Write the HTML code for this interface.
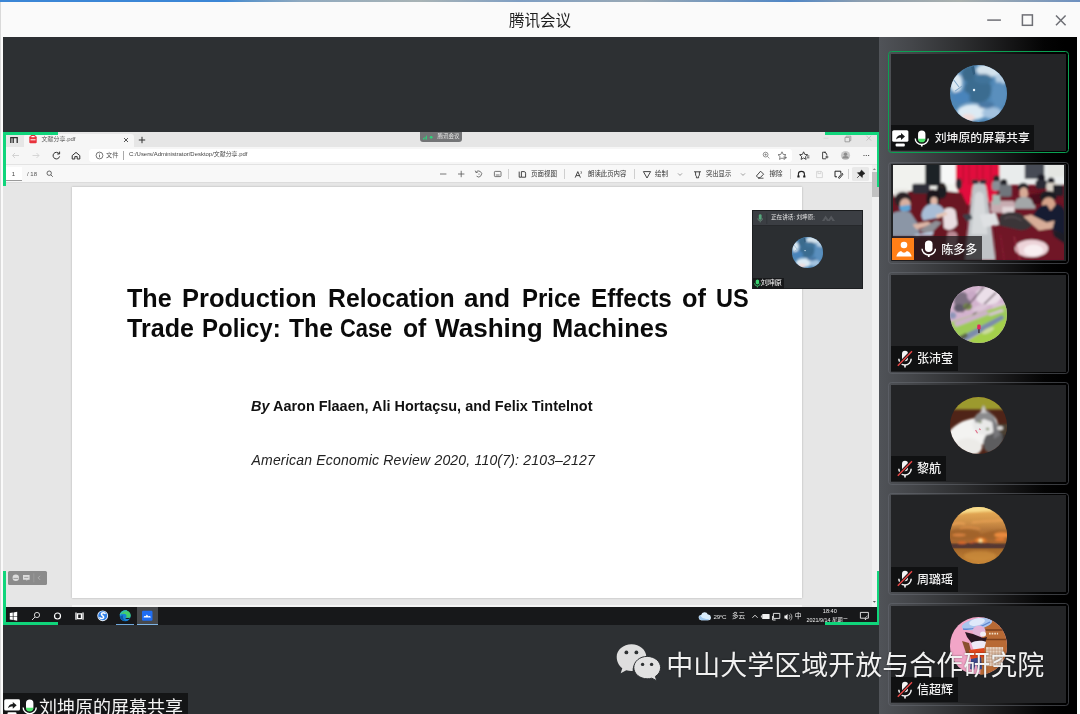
<!DOCTYPE html>
<html lang="zh-CN">
<head>
<meta charset="utf-8">
<title>腾讯会议</title>
<style>
*{box-sizing:border-box;margin:0;padding:0}
html,body{width:1080px;height:714px;overflow:hidden;background:#2d3033}
body{position:relative;font-family:"Liberation Sans","Noto Sans CJK SC",sans-serif;color:#fff}
.abs{position:absolute}
#win{position:absolute;left:0;top:0;width:1080px;height:714px;overflow:hidden;background:#2d3033;will-change:transform;transform:translateZ(0)}
/* title bar */
#topstrip{left:0;top:0;width:1080px;height:3px;background:linear-gradient(90deg,#3b86d6 0,#3b86d6 225px,#5a93c9 245px,#8fa9bf 300px,#a8b3b5 420px,#7f9fc4 520px,#9aa9b4 640px,#4f86c6 790px,#8c9eb0 860px,#a9b0ae 960px,#6d90c0 1080px)}
#titlebar{left:0;top:2px;width:1080px;height:35px;background:#fafafa}
#title{left:0;top:3.400px;width:1080px;height:35px;line-height:35px;text-align:center;color:#1e1e1e;font-size:15.5px}
#lborder{left:0;top:2px;width:3px;height:712px;background:linear-gradient(90deg,#d9d9d9 0,#d9d9d9 .8px,#fafafa 1.200px,#fafafa 3px)}
#rborder{left:1077px;top:37px;width:3px;height:677px;background:#fafafa}
/* side panel */
#side{left:879.400px;top:37px;width:197.600px;height:677px;background:linear-gradient(90deg,#505358 0,#45474b 30px,#2f3032 80px,#161617 130px,#040404 165px,#000 185px)}
.card{position:absolute;left:888px;width:181px;height:102.400px;border:1.500px solid rgba(104,108,114,.55);border-radius:3.500px}
.ci{position:absolute;left:1.500px;top:1.500px;width:175px;height:97.100px;background:#232426;overflow:hidden}
.card.active{border-color:#0ba153}
.avatar{position:absolute;left:59.400px;top:11.800px;width:57.100px;height:57.100px;border-radius:50%;overflow:hidden}
.nm{position:absolute;left:0;bottom:.5px;height:25.300px;background:#101112;font-size:12px;line-height:24px;white-space:nowrap;color:#f2f2f2;font-weight:500}
/* shared screen */
#share{left:0;top:0;width:1080px;height:714px;clip-path:inset(132px 200.600px 89px 3px);background:#e6e6e6;color:#333}
#share div,#share span,#share svg{position:absolute}
.t{white-space:nowrap;line-height:1;color:#444}
.w{font-size:26.5px;font-weight:bold;color:#0a0a0a!important;transform-origin:0 0;display:inline-block}
.g{position:absolute;background:#10d57b}
</style>
</head>
<body>
<div id="win">
<svg width="0" height="0" style="position:absolute"><defs>
<filter id="b1" x="-20%" y="-20%" width="140%" height="140%"><feGaussianBlur stdDeviation="1.6"/></filter>
<filter id="b2" x="-20%" y="-20%" width="140%" height="140%"><feGaussianBlur stdDeviation="0.9"/></filter>
<filter id="b3" x="-20%" y="-20%" width="140%" height="140%"><feGaussianBlur stdDeviation="0.5"/></filter>
<symbol id="av1" viewBox="0 0 57 57"><rect width="57" height="57" fill="#4f87b6"/><g filter="url(#b1)"><ellipse cx="40" cy="5" rx="14" ry="7" fill="#d3e2ec"/><ellipse cx="51" cy="14" rx="6" ry="6" fill="#b5cde2"/><ellipse cx="6" cy="18" rx="6.500" ry="10" fill="#dce8f1"/><ellipse cx="19" cy="9" rx="7" ry="8" fill="#3b6a8c"/><ellipse cx="28" cy="25" rx="13.500" ry="13" fill="#3b6c90"/><ellipse cx="33" cy="14" rx="9" ry="5" fill="#41739a"/><ellipse cx="49" cy="30" rx="8" ry="13" fill="#5a8fbd"/><ellipse cx="11" cy="32" rx="9" ry="6" fill="#4a84bb"/><ellipse cx="22" cy="47" rx="15" ry="8" fill="#dceaf4"/><ellipse cx="18" cy="53" rx="7" ry="4" fill="#f0dcda"/><ellipse cx="42" cy="48" rx="10" ry="6" fill="#a3c2df"/><ellipse cx="36" cy="40" rx="8" ry="3.500" fill="#4878a4"/></g><g filter="url(#b3)"><path d="M21 2l2 8 2-1-1-8z" fill="#335f80"/><path d="M3 14l6 8M5 26l7-5" stroke="#7fa6c8" stroke-width="1" fill="none"/><circle cx="24" cy="25" r="1.200" fill="#eaf6ff"/></g></symbol>
<symbol id="mic" viewBox="0 0 16 18"><rect x="4.100" y=".4" width="7.800" height="12" rx="3.900" fill="#fff"/><path d="M1.100 9a6.900 6.400 0 0 0 13.800 0" fill="none" stroke="#fff" stroke-width="1.500"/><path d="M8 15.200v2.400" stroke="#fff" stroke-width="1.800"/></symbol>
<symbol id="micoff" viewBox="0 0 16 18"><rect x="5" y=".8" width="6" height="10.400" rx="3" fill="#f4f4f4"/><path d="M1.800 8.800a6.200 6.200 0 0 0 12.400 0" fill="none" stroke="#f4f4f4" stroke-width="1.500"/><path d="M8 15v2.600" stroke="#f4f4f4" stroke-width="1.600"/><path d="M1 15.600L14.800 1.400" stroke="#141516" stroke-width="3.200"/><path d="M.8 15.800L15 1.200" stroke="#ef4646" stroke-width="1.300"/></symbol>
</defs></svg>

<div id="topstrip" class="abs"></div>
<div id="titlebar" class="abs"></div>
<div id="title" class="abs">腾讯会议</div>
<svg class="abs" style="left:980px;top:8px" width="96" height="24" viewBox="0 0 96 24"><path d="M7.200 12.100h13.700" stroke="#6e6f75" stroke-width="1.500"/><rect x="42.400" y="6.900" width="10" height="10.400" fill="none" stroke="#6e6f75" stroke-width="1.500"/><path d="M76 7.400l9.600 9.800M85.600 7.400L76 17.200" stroke="#6e6f75" stroke-width="1.500"/></svg>
<div id="lborder" class="abs"></div>
<div id="rborder" class="abs"></div>

<div id="share" class="abs">
<!-- tab row -->
<div style="left:3px;top:132px;width:877px;height:14.500px;background:#e6e6e6"></div>
<div style="left:24px;top:134px;width:110px;height:13px;background:#f6f6f6;border-radius:3px 3px 0 0"></div>
<!-- address row -->
<div style="left:3px;top:146.5px;width:876px;height:18px;background:#f6f6f6"></div>
<div style="left:88.5px;top:148.5px;width:703px;height:13.5px;background:#fff;border-radius:3px"></div>
<!-- pdf toolbar -->
<div style="left:3px;top:164.3px;width:876px;height:19px;background:#f8f8f8;border-top:1px solid #e3e3e3;border-bottom:1px solid #dcdcdc"></div>
<!-- tab row content -->
<svg style="left:9px;top:134.5px" width="10" height="10" viewBox="0 0 10 10"><path d="M1.8 8V2.6h6.4V8M4.2 2.6V8" fill="none" stroke="#2b2b2b" stroke-width="1.3"/></svg>
<svg style="left:28.5px;top:135px" width="8" height="8.5" viewBox="0 0 8 8.5"><rect x=".3" y="1.2" width="7.4" height="7" rx="1" fill="#e8323c"/><rect x="1.6" y="0" width="4.8" height="3.4" rx=".8" fill="#e8323c"/><rect x="2.4" y="1" width="3.2" height="1.2" fill="#fff"/><rect x="1.5" y="4.3" width="5" height="1" fill="#fff"/></svg>
<span class="t" style="left:41.5px;top:136px;font-size:6px;color:#555">文献分享.pdf</span>
<svg style="left:122.5px;top:136.5px" width="6" height="6" viewBox="0 0 6 6"><path d="M1 1l4 4M5 1L1 5" stroke="#444" stroke-width=".9"/></svg>
<svg style="left:137.5px;top:135.5px" width="8" height="8" viewBox="0 0 8 8"><path d="M4 .8v6.4M.8 4h6.4" stroke="#333" stroke-width="1"/></svg>
<div style="left:420px;top:132px;width:41.5px;height:9.5px;background:#737476;border-radius:0 0 3px 3px"></div>
<svg style="left:423px;top:134px" width="12" height="6" viewBox="0 0 12 6"><path d="M.6 5.5v-1.5M2 5.5v-2.6M3.4 5.5v-3.8" stroke="#2fd27a" stroke-width="1"/><circle cx="8.2" cy="3.3" r="1.4" fill="#2fd27a"/></svg>
<span class="t" style="left:437.5px;top:134px;font-size:5.5px;color:#e8e8e8">腾讯会议</span>
<svg style="left:822px;top:134px" width="52" height="10" viewBox="0 0 52 10"><path d="M1.5 4.2h5" stroke="#cfcfcf" stroke-width=".8"/><path d="M23 3.4h4.6v4.4H23zM24.2 3.4V2.2h4.6v4.4h-1.2" fill="none" stroke="#9a9a9a" stroke-width=".9"/><path d="M44.5 1.8l4.6 4.8M49.1 1.8l-4.6 4.8" stroke="#b9b9b9" stroke-width=".8"/></svg>
<!-- address row content -->
<svg style="left:10px;top:150px" width="72" height="11" viewBox="0 0 72 11"><path d="M9 5.5H2.5M5 3L2.5 5.5 5 8" fill="none" stroke="#cfcfcf" stroke-width=".9"/><path d="M22.5 5.5H29M26.5 3L29 5.5 26.5 8" fill="none" stroke="#d2d2d2" stroke-width=".9"/><path d="M49 3.6A3.3 3.3 0 1 0 49.6 6.4" fill="none" stroke="#333" stroke-width="1"/><path d="M49.6 1.6v2.4h-2.4" fill="none" stroke="#333" stroke-width="1"/><path d="M62.2 5.6L66 2.4l3.8 3.2V9h-2.6V6.6h-2.4V9h-2.6z" fill="none" stroke="#333" stroke-width="1"/></svg>
<svg style="left:94.5px;top:151px" width="9" height="9" viewBox="0 0 9 9"><circle cx="4.5" cy="4.5" r="3.4" fill="none" stroke="#555" stroke-width=".8"/><path d="M4.5 4v2.4M4.5 2.6v.8" stroke="#555" stroke-width=".8"/></svg>
<span class="t" style="left:106px;top:151.8px;font-size:6.2px;color:#555">文件</span>
<div style="left:123.2px;top:151px;width:.8px;height:9px;background:#aaa"></div>
<span id="url" class="t" style="left:129px;top:152px;font-size:5.95px;color:#444">C:/Users/Administrator/Desktop/文献分享.pdf</span>
<svg style="left:760px;top:150px" width="118" height="11" viewBox="0 0 118 11"><circle cx="5.6" cy="4.6" r="2.4" fill="none" stroke="#777" stroke-width=".8"/><path d="M7.4 6.4l2 2M4.4 4.6h2.4M5.6 3.4v2.4" stroke="#777" stroke-width=".7"/><path d="M22 1.8l1.2 2.6 2.8.3-2.1 1.9.6 2.8L22 8l-2.5 1.4.6-2.8L18 4.7l2.8-.3z" fill="none" stroke="#666" stroke-width=".8"/><path d="M24.4 7.6h2.4M25.6 6.4v2.4" stroke="#666" stroke-width=".8"/><path d="M43.6 1.8l1.2 2.6 2.8.3-2.1 1.9.6 2.8L43.6 8l-2.5 1.4.6-2.8-2.1-1.9 2.8-.3z" fill="none" stroke="#333" stroke-width=".9"/><path d="M47 6h2.4M47 7.8h2.4" stroke="#333" stroke-width=".8"/><path d="M66 2.2h-3.4v6.6H66M64 2.2a3.3 3.3 0 0 1 3 3" fill="none" stroke="#333" stroke-width=".9"/><path d="M65.4 7h3M66.9 5.5v3" stroke="#333" stroke-width=".9"/><circle cx="85.5" cy="5.5" r="4.6" fill="#c9c9c9"/><circle cx="85.5" cy="4.2" r="1.7" fill="#8c8c8c"/><path d="M82.3 8.4a3.2 2.4 0 0 1 6.4 0z" fill="#8c8c8c"/><circle cx="104" cy="5.5" r=".6" fill="#333"/><circle cx="106.3" cy="5.5" r=".6" fill="#333"/><circle cx="108.6" cy="5.5" r=".6" fill="#333"/></svg>
<!-- pdf toolbar content -->
<div style="left:5.5px;top:166.5px;width:16.5px;height:14px;background:#fff;border-bottom:1px solid #9a9a9a"></div>
<span class="t" style="left:11.8px;top:170.5px;font-size:6px;color:#444">1</span>
<span class="t" style="left:27px;top:170.5px;font-size:6px;color:#555">/ 18</span>
<svg style="left:46px;top:170px" width="8" height="8" viewBox="0 0 8 8"><circle cx="3.2" cy="3.2" r="2.2" fill="none" stroke="#444" stroke-width=".8"/><path d="M4.8 4.8l2 2" stroke="#444" stroke-width=".8"/></svg>
<svg style="left:436px;top:168px" width="72" height="12" viewBox="0 0 72 12"><path d="M4 6h6.4" stroke="#555" stroke-width=".8"/><path d="M22 6h6.4M25.2 2.8v6.4" stroke="#555" stroke-width=".8"/><path d="M40 4.4A3 3 0 1 1 40.6 8.2" fill="none" stroke="#555" stroke-width=".8"/><path d="M39.2 2.6l.7 2 2-.4" fill="none" stroke="#555" stroke-width=".7"/><circle cx="43" cy="6" r=".6" fill="#555"/><rect x="58.4" y="3.4" width="6.6" height="5.2" rx=".8" fill="none" stroke="#555" stroke-width=".8"/><path d="M59.8 7h3.8" stroke="#555" stroke-width=".8"/></svg>
<div style="left:508px;top:169px;width:.8px;height:9.5px;background:#cfcfcf"></div>
<svg style="left:517px;top:169.5px" width="10" height="9" viewBox="0 0 10 9"><path d="M2.2 1.6v5.6h2M4.4 1.6h2.8a1.6 1.6 0 0 1 1.4 1.6v4h-4.2z" fill="none" stroke="#333" stroke-width=".9"/></svg>
<span class="t" style="left:531px;top:171px;font-size:6.5px;color:#333">页面视图</span>
<div style="left:564px;top:169px;width:.8px;height:9.5px;background:#cfcfcf"></div>
<svg style="left:573.5px;top:169.5px" width="10" height="9" viewBox="0 0 10 9"><path d="M1.2 7.6L3.8 1.6 6.4 7.6M2.2 5.6h3.2" fill="none" stroke="#333" stroke-width=".9"/><path d="M7 1.2a2.4 2.4 0 0 1 0 2.6" fill="none" stroke="#333" stroke-width=".7"/></svg>
<span class="t" style="left:588px;top:171px;font-size:6.4px;color:#333">朗读此页内容</span>
<div style="left:634px;top:169px;width:.8px;height:9.5px;background:#cfcfcf"></div>
<svg style="left:642px;top:169.5px" width="10" height="9" viewBox="0 0 10 9"><path d="M1.4 1.6h7.2L5 8z" fill="none" stroke="#333" stroke-width=".9"/></svg>
<span class="t" style="left:655px;top:171px;font-size:6.5px;color:#333">绘制</span>
<svg style="left:676.5px;top:172px" width="6" height="5" viewBox="0 0 6 5"><path d="M1 1.4l2 2 2-2" fill="none" stroke="#777" stroke-width=".7"/></svg>
<svg style="left:692.5px;top:169.5px" width="9" height="9" viewBox="0 0 9 9"><path d="M1 1.8h7M2.6 1.8v3.4l.8 1v1.6h2.2V6.200l.8-1V1.8" fill="none" stroke="#333" stroke-width=".9"/></svg>
<span class="t" style="left:706px;top:171px;font-size:6.3px;color:#333">突出显示</span>
<svg style="left:739.5px;top:172px" width="6" height="5" viewBox="0 0 6 5"><path d="M1 1.4l2 2 2-2" fill="none" stroke="#777" stroke-width=".7"/></svg>
<svg style="left:755px;top:169.5px" width="10" height="9" viewBox="0 0 10 9"><path d="M5.6 1.2l3 3-3.600 3.600H3.200L1.400 6z" fill="none" stroke="#333" stroke-width=".9"/><path d="M3 8.200h5.500" stroke="#333" stroke-width=".8"/></svg>
<span class="t" style="left:769.5px;top:171px;font-size:6.5px;color:#333">擦除</span>
<div style="left:790px;top:169px;width:.8px;height:9.5px;background:#cfcfcf"></div>
<svg style="left:796px;top:168.5px" width="52" height="11" viewBox="0 0 52 11"><path d="M2.400 7.800V5a3 2.600 0 0 1 6 0v2.800" fill="none" stroke="#222" stroke-width="1.100"/><path d="M1.400 6.600h2.200v2h-2.200zM7.200 6.600h2.200v2h-2.200z" fill="#222"/><path d="M20.600 2.400h4.800l1 1v5.200h-5.800zM22 2.400v2.200h2.800V2.400" fill="none" stroke="#cfcfcf" stroke-width=".8"/><path d="M39 2.200h5.800v2.400M39 2.200v5.600h2M42.400 8.600l3.600-4.200 1 .9-3.600 4.100z" fill="none" stroke="#222" stroke-width="1"/></svg>
<div style="left:848px;top:169px;width:.8px;height:9.5px;background:#cfcfcf"></div>
<div style="left:851.5px;top:166.6px;width:17.700px;height:14px;background:#e9e9e9;border-radius:1.5px"></div>
<svg style="left:855.5px;top:168.5px" width="10" height="10" viewBox="0 0 10 10"><path d="M5.400 1l3.600 3.600-1 .3-1.500 1.500-.2 2.200L3.800 6.200 1.200 8.800l2.600-2.600L1.400 3.700l2.200-.2L5.100 2z" fill="#222" stroke="#222" stroke-width=".5" stroke-linejoin="round"/></svg>
<!-- scrollbar -->
<div style="left:872px;top:165.300px;width:7.300px;height:441.700px;background:#f0f0f0"></div>
<div style="left:872px;top:172.300px;width:7.300px;height:24.600px;background:#c1c1c1"></div>
<svg style="left:872px;top:167px" width="5" height="4" viewBox="0 0 5 4"><path d="M.8 3l1.600-1.800L4 3z" fill="#8a8a8a"/></svg>
<svg style="left:872px;top:600px" width="5" height="4" viewBox="0 0 5 4"><path d="M.8 1l1.600 1.800L4 1z" fill="#555"/></svg>
<!-- page -->
<div id="page" style="left:72px;top:186.5px;width:730px;height:411.5px;background:#fff;box-shadow:0 0 2px rgba(0,0,0,.25)"></div>
<div style="left:72px;top:605px;width:730px;height:3px;background:#f4f4f4"></div>
<div id="ttl" style="left:0;top:0">
<span class="t w" style="left:126.6px;top:285.4px;transform:scaleX(0.949)">The</span>
<span class="t w" style="left:182.0px;top:285.4px;transform:scaleX(0.962)">Production</span>
<span class="t w" style="left:327.5px;top:285.4px;transform:scaleX(0.935)">Relocation</span>
<span class="t w" style="left:464.4px;top:285.4px;transform:scaleX(0.978)">and</span>
<span class="t w" style="left:521.6px;top:285.4px;transform:scaleX(0.904)">Price</span>
<span class="t w" style="left:591.2px;top:285.4px;transform:scaleX(0.913)">Effects</span>
<span class="t w" style="left:682.2px;top:285.4px;transform:scaleX(0.955)">of</span>
<span class="t w" style="left:716.2px;top:285.4px;transform:scaleX(0.888)">US</span>
<span class="t w" style="left:126.6px;top:314.6px;transform:scaleX(0.946)">Trade</span>
<span class="t w" style="left:202.2px;top:314.6px;transform:scaleX(0.906)">Policy:</span>
<span class="t w" style="left:288.5px;top:314.6px;transform:scaleX(0.934)">The</span>
<span class="t w" style="left:340.3px;top:314.6px;transform:scaleX(0.824)">Case</span>
<span class="t w" style="left:403.2px;top:314.6px;transform:scaleX(0.931)">of</span>
<span class="t w" style="left:435.2px;top:314.6px;transform:scaleX(0.984)">Washing</span>
<span class="t w" style="left:551.6px;top:314.6px;transform:scaleX(0.961)">Machines</span>
</div>
<span id="t3" class="t" style="left:251px;top:397.8px;font-size:15px;font-weight:bold;color:#111;transform-origin:0 0;transform:scaleX(0.9633)"><i>By</i> Aaron Flaaen, Ali Hortaçsu, and Felix Tintelnot</span>
<span id="t4" class="t" style="left:251.5px;top:452.8px;font-size:14px;font-style:italic;color:#222;letter-spacing:.19px">American Economic Review 2020, 110(7): 2103–2127</span>
<!-- taskbar -->
<div id="taskbar" style="left:3px;top:607px;width:877px;height:18px;background:#17181a"></div>
<div style="left:136.7px;top:607px;width:21.3px;height:18px;background:#47494c"></div>
<div style="left:116px;top:623.6px;width:18px;height:1.2px;background:#6fa8dc"></div>
<div style="left:136.7px;top:623.6px;width:21.3px;height:1.2px;background:#7fb6e8"></div>
<svg style="left:9px;top:610px" width="150" height="13" viewBox="0 0 150 13"><path d="M.8 3l3-.5v3.400H.8zM4.500 2.400l3.700-.6v4.100H4.500zM.8 6.600h3v3.400l-3-.5zM4.500 6.600h3.700v4.100l-3.700-.6z" fill="#fff"/><circle cx="28" cy="5" r="2.600" fill="none" stroke="#e8e8e8" stroke-width=".9"/><path d="M26 7l-3 3" stroke="#e8e8e8" stroke-width=".9"/><circle cx="48.500" cy="6" r="3" fill="none" stroke="#fff" stroke-width="1.200"/><path d="M67 2.600v7.200M74 2.600v7.200" stroke="#fff" stroke-width="1.300"/><path d="M68.600 3.800h3.800v4.800h-3.800z" fill="none" stroke="#fff" stroke-width="1.200"/><circle cx="93.700" cy="5.800" r="5.400" fill="#f2f6fb"/><circle cx="93.700" cy="5.800" r="4.500" fill="#2f7fe6"/><path d="M96 3.400c-2.200-1.600-5 .4-2.600 2.200 2.800 1.600.4 4-2.400 2.200" fill="none" stroke="#fff" stroke-width="1.600" stroke-linecap="round"/><circle cx="116.200" cy="5.800" r="5.500" fill="#1783d6"/><path d="M110.900 4.600a5.500 5.500 0 0 1 10.800.9c0 1.500-1 2.300-2.600 2.300h-2.500c1.200-1 1.300-2.400.3-3.300-1.500-1.200-4-.5-6 .1z" fill="#43cf6c"/><path d="M111 4.800c1.500-2.800 4-4.300 7-4" fill="none" stroke="#2bb7c4" stroke-width="1.200"/><path d="M116.300 7.900h4.800c-.7.900-1.900 1.300-3.200 1.100-.8-.1-1.300-.5-1.600-1.100z" fill="#17181a"/><path d="M114.200 5.200c-.8 1.800-.2 4.400 2.400 5.600-2.600.4-5.200-1.400-5.700-4 1-.9 2.200-1.500 3.300-1.600z" fill="#0c5aa8"/><rect x="133" y=".8" width="10.500" height="10" rx="1.200" fill="#1f6df2"/><path d="M134.600 7.600c0-1.400 1.200-2 2-1.400l1.300-1.600 1.500 1.800c1-.8 2.400-.2 2.400 1.200z" fill="#fff"/></svg>
<svg style="left:698px;top:610.500px" width="14" height="11" viewBox="0 0 14 11"><path d="M3.400 9.200a2.600 2.600 0 0 1-.3-5.200 3.600 3.600 0 0 1 6.800-.4 2.800 2.800 0 0 1 .5 5.600z" fill="#d9ecfb"/><path d="M3.400 9.200a2.600 2.600 0 0 1-.9-4.900c.6 2.600 4.400 3.900 8.600 3.900a2.800 2.800 0 0 1-1 1z" fill="#9fc8ee"/></svg>
<span class="t" style="left:713.500px;top:613.500px;font-size:6.200px;color:#e6e6e6;letter-spacing:-.3px">29°C</span>
<span class="t" style="left:732px;top:613.300px;font-size:6.600px;color:#e6e6e6">多云</span>
<svg style="left:750px;top:610.500px" width="54" height="11" viewBox="0 0 54 11"><path d="M2.400 6.800l2.600-2.600 2.600 2.600" fill="none" stroke="#eee" stroke-width=".9"/><rect x="12.200" y="3" width="7.400" height="5" rx=".6" fill="#f0f0f0"/><path d="M11.400 4.500v2" stroke="#f0f0f0" stroke-width=".9"/><path d="M23.400 2.400h6.400v5h-6.400zM22.600 5v4h3" fill="none" stroke="#f0f0f0" stroke-width=".9"/><path d="M34.400 4.600h1.400l1.800-1.600v6l-1.800-1.600h-1.400z" fill="#f0f0f0"/><path d="M39 3.800a3 3 0 0 1 0 4.400M40.400 2.600a4.600 4.600 0 0 1 0 6.800" fill="none" stroke="#e0e0e0" stroke-width=".7"/></svg>
<span class="t" style="left:794.800px;top:612.800px;font-size:6.800px;color:#f2f2f2">中</span>
<span class="t" style="left:822.800px;top:609.300px;font-size:5.600px;color:#f0f0f0">18:40</span>
<span id="date" class="t" style="left:806.500px;top:618px;font-size:5.400px;color:#f0f0f0">2021/9/14 星期二</span>
<svg style="left:859px;top:611px" width="11" height="10" viewBox="0 0 11 10"><path d="M1.400 1.400h8v5.800H7.600L6.400 8.800V7.200H1.400z" fill="none" stroke="#eee" stroke-width=".9"/><path d="M6 7.200l2.600-2.600" stroke="#eee" stroke-width=".7"/></svg>
<!-- floating pill -->
<div style="left:8px;top:571px;width:38.700px;height:13.600px;background:#8b8b8b;border-radius:1.500px"></div>
<svg style="left:8px;top:571px" width="39" height="14" viewBox="0 0 39 14"><circle cx="7.800" cy="6.800" r="3.200" fill="#dcdcdc"/><path d="M5.400 7.400h4.800" stroke="#8b8b8b" stroke-width=".8"/><path d="M15 4h6.600v4.800h-2l-1 1.200v-1.200H15z" fill="#dcdcdc"/><path d="M16.200 6.400h4.200" stroke="#8b8b8b" stroke-width=".7"/><path d="M25.800 2.400v9" stroke="#a4a4a4" stroke-width=".6"/><path d="M32 4.800l-1.800 2 1.800 2" fill="none" stroke="#bdbdbd" stroke-width=".7"/></svg>
<!-- mini window -->
<div style="left:751.500px;top:209.800px;width:111.700px;height:79.400px;background:#2b2e31;border:1px solid #1d1f21"></div>
<div style="left:752.500px;top:210.800px;width:109.700px;height:15.400px;background:#3b3e43;border-bottom:1px solid #26282b"></div>
<svg style="left:755px;top:212px" width="90" height="13" viewBox="0 0 90 13"><rect x="3.800" y="2.200" width="2.800" height="5.600" rx="1.400" fill="#56a77c"/><path d="M2.800 6.400a2.400 2.400 0 0 0 4.800 0M5.200 8.800v1.600" fill="none" stroke="#6f8f80" stroke-width=".7"/><path d="M11.800 1v11" stroke="#2d3034" stroke-width=".7"/><path d="M67 9l3.600-5.400 2.800 4 2.800-4L80 9h-2.600l-1.200-2-1.400 2h-2.800l-1.400-2-1.200 2z" fill="#55585d"/></svg>
<span class="t" style="left:771px;top:214.800px;font-size:5.600px;color:#e4e4e4">正在讲话: 刘坤原;</span>
<svg id="miniav" style="left:791.800px;top:236.700px;border-radius:50%;overflow:hidden" width="31" height="31" viewBox="0 0 57 57"><use href="#av1"/></svg>
<div style="left:752.500px;top:277.500px;width:31.500px;height:11.200px;background:#17181a"></div>
<svg style="left:753.500px;top:278.500px" width="7" height="9" viewBox="0 0 7 9"><rect x="1.700" y=".4" width="3.400" height="5" rx="1.700" fill="#39d36f"/><path d="M.6 4.200a2.800 2.800 0 0 0 5.600 0M3.400 7v1.400" fill="none" stroke="#39d36f" stroke-width=".8"/></svg>
<span class="t" style="left:760.500px;top:279.300px;font-size:7.400px;color:#f4f4f4;letter-spacing:-.4px">刘坤原</span>
<!-- green corners -->
<div class="g" style="left:3px;top:132px;width:54.800px;height:2.700px"></div>
<div class="g" style="left:3px;top:132px;width:2.600px;height:54px"></div>
<div class="g" style="left:824.500px;top:132px;width:55px;height:2.700px"></div>
<div class="g" style="left:876.500px;top:132px;width:3px;height:54.500px"></div>
<div class="g" style="left:3px;top:622.300px;width:54.800px;height:2.700px"></div>
<div class="g" style="left:3px;top:570.500px;width:2.600px;height:54.500px"></div>
<div class="g" style="left:824.500px;top:622.300px;width:55px;height:2.700px"></div>
<div class="g" style="left:876.500px;top:570.500px;width:3px;height:54.500px"></div>
</div>

<div id="side" class="abs"></div>
<div class="card active" style="top:51px">
<div class="ci"><svg class="avatar" viewBox="0 0 57 57"><use href="#av1"/></svg>
<div class="nm" style="width:143.200px"><svg style="position:absolute;left:1px;top:4.800px" width="17" height="17" viewBox="0 0 17 17"><rect x=".2" y=".2" width="16.200" height="11.600" rx="1.600" fill="#fff"/><rect x="3.600" y="13.600" width="9.200" height="2.800" rx="1" fill="#fff"/><path d="M4 9.400c.6-2.800 2.400-4.200 5-4.300V3l4 3.500-4 3.500V7.800C7 7.700 5.400 8.200 4 9.400z" fill="#1a1b1c"/></svg><svg style="position:absolute;left:23.700px;top:4.800px" width="15.500" height="17" viewBox="0 0 16 18"><use href="#mic"/><path d="M4.100 9.200h7.800a3.900 3.900 0 0 1-7.800 0z" fill="#4be36a"/></svg><span style="position:absolute;left:44.200px;top:.9px;font-size:11.900px">刘坤原的屏幕共享</span></div></div>
</div>
<div class="card" style="top:161.800px">
<div class="ci"><svg id="photo" style="position:absolute;left:2.600px;top:.6px" width="170.800" height="95.300" preserveAspectRatio="none" viewBox="0 0 175 96"><rect width="175" height="96" fill="#6d1424"/><g filter="url(#b2)">
<rect x="-2" y="-2" width="70" height="34" fill="#f1f2ee"/>
<rect x="108" y="-2" width="70" height="22" fill="#e9ecec"/>
<rect x="33" y="-2" width="16" height="23" fill="#1d2027"/>
<rect x="49" y="-2" width="16" height="21" fill="#f6f7f7"/>
<rect x="135" y="-2" width="20" height="16" fill="#474c55"/>
<rect x="158" y="-2" width="19" height="14" fill="#e4e6e2"/>
<path d="M64.400-2H109V22c-3 6-4 10-5 16H96.400L94 22H82l-3 18h-9c-1-8-3-14-5.600-18z" fill="#e2103c"/>
<path d="M72-2v20M78-2v22M86-2v16M92-2v16M100-2v22" stroke="#b80c30" stroke-width="1.200" fill="none"/>
<path d="M81.500 21.600Q84 17 88.400 17T95.400 21.600Q100 50 104.900 96H73.700Q78 50 81.500 21.600z" fill="#bfc3c6"/>
<path d="M84 30q4-6 9 0l4 40H80z" fill="#d6d9db"/>
<rect x="80.800" y="14.900" width="6.600" height="4" fill="#2b2c36"/><rect x="89" y="14.900" width="6.600" height="4" fill="#2b2c36"/>
<path d="M-2 30L30 24l40 4 6 12-3 56H-2z" fill="#6a1323"/>
<path d="M104 34l40-6 33 14v54h-72z" fill="#701626"/>
<path d="M51 46c4-4 10-4 13 0l2 14c-4 6-10 7-14 3z" fill="#e9dde0"/>
<path d="M56 68c4-2 8-2 10 2l-2 20H54z" fill="#b98a94"/>
<rect x="19.700" y="19" width="18" height="10" rx="2" fill="#2d2e37"/>
<rect x="1" y="24" width="14" height="8" fill="#e8e8e4"/>
<ellipse cx="50" cy="26" rx="5.500" ry="8" fill="#1b1b21"/><ellipse cx="50.500" cy="21" rx="3" ry="3" fill="#2a2224"/>
<ellipse cx="67.500" cy="19" rx="3.200" ry="6" fill="#2a2a33"/>
<ellipse cx="41" cy="34" rx="7" ry="9.500" fill="#1d191d"/><ellipse cx="42" cy="36.500" rx="3.600" ry="4.200" fill="#e2b7a6"/>
<path d="M29 51c1-8 6-12 12-12s10 3 12 8l-6 6-16 3z" fill="#a8bdd6"/>
<path d="M44 50l10-3 2 3-11 4z" fill="#e6c4b4"/>
<ellipse cx="10" cy="35" rx="8.500" ry="8" fill="#2b2326"/><ellipse cx="12.500" cy="39.500" rx="5.500" ry="6" fill="#d9b0a0"/>
<path d="M6.500 41.500l11-1.500 .5 5c-3 2.500-8 2.500-11 0z" fill="#5ea5d6"/>
<path d="M-2 50c4-4 14-5 20-2l8 12 1 12H-2z" fill="#8b96a6"/>
<path d="M20 60l16-3 4 3-16 5z" fill="#dcb6a6"/>
<path d="M26 66l18-10 6 2-12 12z" fill="#8e9096"/><path d="M22 70l20-3-2 4H22z" fill="#b9cbe0"/>
<ellipse cx="106" cy="14" rx="3.400" ry="3.600" fill="#25252b"/><rect x="101.500" y="16" width="10" height="10" rx="3" fill="#8a8f96"/>
<ellipse cx="113.500" cy="18" rx="3.600" ry="3.800" fill="#222228"/><rect x="109" y="20" width="13" height="12" rx="3" fill="#6f747b"/>
<ellipse cx="133.500" cy="23" rx="5.500" ry="5" fill="#26262a"/><ellipse cx="134" cy="28" rx="4.600" ry="5.500" fill="#d8ab96"/>
<path d="M124 44c0-8 4-12 10-12s11 4 12 12z" fill="#a3a7a8"/>
<ellipse cx="152" cy="13" rx="4" ry="3.600" fill="#1f1f25"/><rect x="146" y="15" width="12" height="9" rx="3" fill="#2b2c34"/>
<ellipse cx="162" cy="16" rx="3.600" ry="3.400" fill="#1f1f25"/><rect x="157" y="18" width="12" height="9" rx="3" fill="#d9d2c8"/>
<rect x="164" y="20" width="10" height="11" fill="#23232a"/>
<path d="M140 30l12-2 6 10-14 2z" fill="#4c0f1a"/>
<rect x="99.800" y="36" width="25" height="12" rx="3" fill="#c7acb1"/><rect x="102" y="30" width="8" height="10" fill="#a9b9b4"/>
<rect x="112" y="42" width="12" height="7" fill="#e2d6d8"/>
<path d="M88.800 50l16-2 4 12-16 3z" fill="#dfe1e3"/>
<path d="M71 50l8-1 2.500 5-6 3z" fill="#3d4048"/>
<path d="M109 52c4-5 14-6 22-3l12 10c-2 6-10 8-16 6l-18-4z" fill="#3b3437"/><path d="M114 54c6-3 12-2 18 2" stroke="#5a5256" stroke-width="1.200" fill="none"/>
<ellipse cx="159" cy="32" rx="8.500" ry="6" fill="#1d1d20"/><ellipse cx="159.500" cy="40" rx="7" ry="7.500" fill="#d5a38a"/>
<path d="M143.600 52c2-8 8-12 14-12l4 6 6-7c5 1 8 4 9 8v24l-14-6-10-8z" fill="#141a30"/>
<path d="M133.500 52l8-2 16 8 8-2-2 8-14 2z" fill="#d8ad98"/>
<path d="M163 66l14 4v10l-12-8z" fill="#1a1c28"/>
<ellipse cx="142" cy="84" rx="17" ry="9" fill="#ecd3d8"/><ellipse cx="144" cy="86" rx="10" ry="6" fill="#f8eef0"/>
<path d="M110 70l4 26" stroke="#8a2234" stroke-width="1" fill="none"/><path d="M124 72l6 24" stroke="#a83a4c" stroke-width=".8" fill="none"/>
</g></svg>
<div class="nm" style="left:1.500px;bottom:.6px;width:89.700px;height:24.600px;background:rgba(28,26,28,.74)"><div style="position:absolute;left:.3px;top:1.600px;width:22.200px;height:22.400px;background:#ff7f17"></div><svg style="position:absolute;left:2.500px;top:4px" width="18" height="18" viewBox="0 0 18 18"><circle cx="9" cy="5" r="3.300" fill="#fff"/><path d="M1.400 16.400c.6-3.200 2.800-5 4.800-5.400.8 1.200 1.700 1.700 2.800 1.700s2-.5 2.800-1.700c2 .4 4.200 2.200 4.800 5.400z" fill="#fff"/></svg><svg style="position:absolute;left:28.500px;top:3.600px" width="15.500" height="17.500" viewBox="0 0 16 18"><use href="#mic"/></svg><span style="position:absolute;left:49.200px;top:1.600px">陈多多</span></div></div>
</div>
<div class="card" style="top:272px">
<div class="ci"><svg class="avatar" viewBox="0 0 57 57" id="av2"><rect width="57" height="57" fill="#d3b3ce"/><g filter="url(#b2)"><ellipse cx="38" cy="10" rx="13" ry="9" fill="#ebdfe9"/><ellipse cx="50" cy="22" rx="8" ry="5" fill="#dcc4d8"/><ellipse cx="12" cy="15" rx="8" ry="9" fill="#7d6f82"/><ellipse cx="9" cy="22" rx="5" ry="4" fill="#5f5a6a"/><ellipse cx="17.500" cy="20.500" rx="4.200" ry="3.200" fill="#6f8542"/><ellipse cx="22" cy="10" rx="5" ry="5" fill="#c9a9c6"/><path d="M34 1L12 26M46 6.500L20 32" stroke="#5f4d5a" stroke-width="1.200" fill="none"/><path d="M-2 37L60 17v9L-2 45z" fill="#a6cc66"/><path d="M4 36L36 25l3 3L6 41z" fill="#cdb2ca"/><path d="M38 28l14-5 2 3-13 5z" fill="#d8c4d6"/><path d="M-2 44L58 24v9L8 56z" fill="#9dca58"/><path d="M8 52L52 29l2.500 4L14 56z" fill="#7c8cab"/><path d="M6 52l10-5 2 3-8 6z" fill="#5a6248"/><path d="M13 58L60 29v32z" fill="#a4d04c"/><ellipse cx="2.500" cy="29.500" rx="3.500" ry="3.200" fill="#8f95b8"/><ellipse cx="38" cy="44.500" rx="6.500" ry="2.400" fill="#cbdc9c" transform="rotate(-26 38 44.500)"/><ellipse cx="30" cy="22" rx="8" ry="3" fill="#dcc6d8" transform="rotate(-20 30 22)"/></g><rect x="27.200" y="38.400" width="3.400" height="5" rx="1.300" fill="#e2285c"/><rect x="28.200" y="43.200" width="1.400" height="3.800" fill="#3a3034"/></svg>
<div class="nm" style="width:67.200px"><svg style="position:absolute;left:6.200px;top:3.800px" width="16" height="18" viewBox="0 0 16 18"><use href="#micoff"/></svg><span style="position:absolute;left:26.500px;top:1px">张沛莹</span></div></div>
</div>
<div class="card" style="top:382.400px">
<div class="ci"><svg class="avatar" viewBox="0 0 57 57" id="av3"><rect width="57" height="57" fill="#4f2418"/><g filter="url(#b2)"><rect x="-2" y="-2" width="61" height="14.500" fill="#9c9a2e"/><rect x="44" y="27" width="16" height="14" fill="#4b4130"/><rect x="40" y="38" width="20" height="22" fill="#2f2c2a"/><ellipse cx="19" cy="38" rx="25" ry="15" transform="rotate(-24 19 38)" fill="#f3f3f1"/><ellipse cx="18" cy="50" rx="14" ry="9" fill="#ecebe8"/><ellipse cx="43" cy="44" rx="9" ry="12" transform="rotate(30 43 44)" fill="#5d5d5f"/><ellipse cx="35" cy="27" rx="12.500" ry="11" fill="#e9e9e8"/><path d="M24 22c2-6 8-9 14-8l6 5 4 10-6-4-8-3-8 4z" fill="#8b8b8d"/><path d="M30 16l3.500-8 3.500 8z" fill="#c9c7c8"/><path d="M42 22l6 8 2 8-6 4z" fill="#77777a"/><ellipse cx="50" cy="31" rx="3" ry="2" fill="#dcdad8"/><ellipse cx="30" cy="25" rx="1.800" ry="1.300" fill="#7f8f68"/><ellipse cx="37.500" cy="32" rx="1.800" ry="1.200" fill="#7a8a66"/></g><path d="M25.500 33l2 3.200M29 31.800l1.600 1" stroke="#e0708a" stroke-width="1.200" filter="url(#b3)"/></svg>
<div class="nm" style="width:55.400px"><svg style="position:absolute;left:6.200px;top:3.800px" width="16" height="18" viewBox="0 0 16 18"><use href="#micoff"/></svg><span style="position:absolute;left:26.500px;top:1px">黎航</span></div></div>
</div>
<div class="card" style="top:492.800px">
<div class="ci"><svg class="avatar" viewBox="0 0 57 57" id="av4"><defs><linearGradient id="sk" x1="0" y1="0" x2="0" y2="1"><stop offset="0" stop-color="#f0c468"/><stop offset=".12" stop-color="#e0a452"/><stop offset=".3" stop-color="#c98a44"/><stop offset=".4" stop-color="#b4763a"/><stop offset=".62" stop-color="#a8652e"/><stop offset=".665" stop-color="#5a3b33"/><stop offset=".705" stop-color="#5a3b33"/><stop offset=".73" stop-color="#a4672a"/><stop offset="1" stop-color="#c98838"/></linearGradient><radialGradient id="sun" cx=".5" cy=".5" r=".5"><stop offset="0" stop-color="#ffd27a"/><stop offset=".35" stop-color="#ff9a36"/><stop offset="1" stop-color="#e8601c" stop-opacity="0"/></radialGradient></defs><rect width="57" height="57" fill="url(#sk)"/><g filter="url(#b2)"><path d="M8 7.500c8-2.500 20-2.500 36-3.500l-6-6H14z" fill="#f8dc8c"/><path d="M2 17.500c6-2 10-1.500 13-.5M22 15.500c12-2 22-1 34-3" stroke="#eca257" stroke-width="1.700" fill="none"/><path d="M-2 24.500c10-4 22-3 31 0l2 2.500c8-3.500 18-4.500 28-3.500v9H-2z" fill="#a2642c"/><path d="M10 21.500c6-1.500 14-1.500 20 .5" stroke="#dc8e46" stroke-width="1.500" fill="none"/><ellipse cx="52" cy="28" rx="8" ry="2.800" fill="#ea8a3c"/><ellipse cx="50" cy="32.500" rx="5" ry="1.500" fill="#e27a32"/><ellipse cx="9" cy="28" rx="7" ry="1.500" fill="#d88240"/><ellipse cx="12" cy="35.800" rx="4" ry="1" fill="#e8682a"/><ellipse cx="22.500" cy="35.800" rx="3" ry="1" fill="#f06a24"/><ellipse cx="30.500" cy="33.800" rx="7.500" ry="4.500" fill="url(#sun)"/><ellipse cx="30.500" cy="34" rx="1.600" ry="2.200" fill="#ffe6a0"/><path d="M-2 38.200h17c6-3.200 14-3.600 22-2l7 2h15v2.500H-2z" fill="#553733"/><ellipse cx="30" cy="49" rx="16" ry="5" fill="#d39440" opacity=".55"/></g></svg>
<div class="nm" style="width:67.200px"><svg style="position:absolute;left:6.200px;top:3.800px" width="16" height="18" viewBox="0 0 16 18"><use href="#micoff"/></svg><span style="position:absolute;left:26.500px;top:1px">周璐瑶</span></div></div>
</div>
<div class="card" style="top:603.200px">
<div class="ci"><svg class="avatar" viewBox="0 0 57 57" id="av5"><rect width="57" height="57" fill="#f2a5c7"/><g filter="url(#b3)"><path d="M33 4l26-6v62H30z" fill="#b86a36"/><path d="M34 13h24M36 22.500h22" stroke="#7c3f1c" stroke-width="1.600"/><path d="M39 16.500h9" stroke="#f0e0c8" stroke-width="1.800" stroke-dasharray="1.600 1"/><rect x="36" y="30" width="17" height="19" fill="#e6d2c2"/><path d="M36 33h17M36 36h17M36 39h17M36 42h17M36 45h17M39 30v19M42 30v19M45 30v19M48 30v19M51 30v19" stroke="#b98a6a" stroke-width=".6"/><ellipse cx="27" cy="7" rx="15.500" ry="5.500" transform="rotate(-12 27 7)" fill="#a9c5ee"/><ellipse cx="27" cy="5" rx="8" ry="3.600" transform="rotate(-12 27 5)" fill="#dfe9fa"/><path d="M13 12c8 1 18-2 27-7" stroke="#5f86d0" stroke-width="1.400" fill="none"/><ellipse cx="29" cy="14" rx="6.500" ry="5.500" fill="#e3b4d8"/><ellipse cx="33" cy="17" rx="3" ry="2.600" fill="#f2eef6"/><path d="M15 15l8 2 10 4 4-1-2 6-12 2-6-8z" fill="#2a1822"/><path d="M12 24l7 2 3 12-6-2z" fill="#8a4f2e"/><path d="M21 26c4-3 12-3 15-1l-2 7-10 2z" fill="#eeeaf6"/><path d="M19 33l15-2 1 9-14 3z" fill="#e2461c"/><path d="M21 42l10-2 1 12-4 1-2-8-2 8-4-1z" fill="#3b4a8c"/></g></svg>
<div class="nm" style="width:67.200px"><svg style="position:absolute;left:6.200px;top:3.800px" width="16" height="18" viewBox="0 0 16 18"><use href="#micoff"/></svg><span style="position:absolute;left:26.500px;top:1px">信超辉</span></div></div>
</div>


<!-- bottom-left label -->
<div class="abs" style="left:3px;top:693.300px;width:185px;height:21px;background:#141516"></div>
<svg class="abs" style="left:3.800px;top:698.800px" width="16.600" height="16.600" viewBox="0 0 17 17"><rect x=".2" y=".2" width="16.200" height="11.600" rx="1.600" fill="#fff"/><rect x="3.600" y="13.600" width="9.200" height="2.800" rx="1" fill="#fff"/><path d="M4 9.400c.6-2.800 2.400-4.200 5-4.300V3l4 3.500-4 3.500V7.800C7 7.700 5.400 8.200 4 9.400z" fill="#1a1b1c"/></svg>
<svg class="abs" style="left:22px;top:698.600px" width="15.400" height="17.100" viewBox="0 0 16 18"><use href="#mic"/><path d="M4.100 9.200h7.800a3.900 3.900 0 0 1-7.800 0z" fill="#4be36a"/></svg>
<div id="bl" class="abs" style="left:39px;top:696.200px;font-size:18px;line-height:24px;white-space:nowrap;color:#f4f4f4">刘坤原的屏幕共享</div>
<!-- watermark -->
<svg class="abs" style="left:614px;top:641px" width="50" height="44" viewBox="0 0 50 44"><g filter="url(#b3)"><path d="M17.500 3.200c8.200 0 14.800 5.600 14.800 12.600 0 .6 0 1.200-.2 1.800-8.400.4-14 6.200-13.400 12.400-.4 0-.8 0-1.200 0-1.800 0-3.600-.3-5.200-.8l-5.600 3 1.600-5C4.800 24.800 2.700 20.600 2.700 15.800 2.700 8.800 9.300 3.200 17.500 3.200z" fill="#dedede"/><circle cx="12.400" cy="11.400" r="1.900" fill="#2d3033"/><circle cx="22.400" cy="11.400" r="1.900" fill="#2d3033"/><path d="M33.200 15.400c7.400 0 13.400 5 13.400 11.200 0 3.600-2 6.800-5.200 8.800l1.400 4.400-5-2.600c-1.400.4-3 .6-4.600.6-7.400 0-13.400-5-13.400-11.200s6-11.200 13.400-11.200z" fill="#e2e2e2" stroke="#2d3033" stroke-width="1"/><circle cx="28.600" cy="23.400" r="1.700" fill="#2d3033"/><circle cx="37.600" cy="23.400" r="1.700" fill="#2d3033"/></g></svg>
<div id="wm" class="abs" style="left:666.300px;top:646px;font-size:27px;line-height:40px;white-space:nowrap;color:#f1f1f1;text-shadow:0 0 2px rgba(0,0,0,.55)">中山大学区域开放与合作研究院</div>

</div>
</body>
</html>
